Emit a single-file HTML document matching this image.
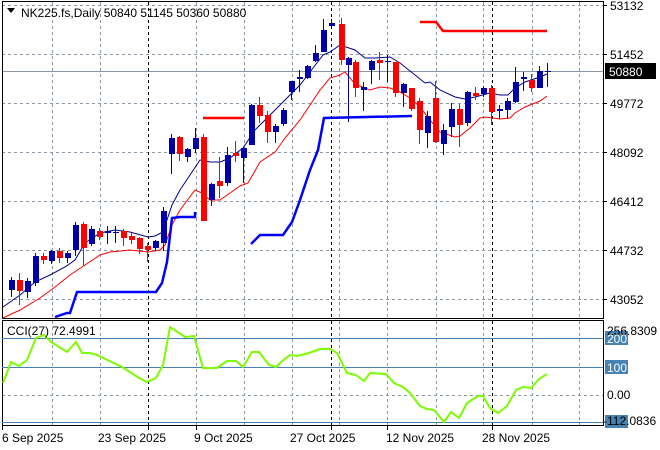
<!DOCTYPE html>
<html><head><meta charset="utf-8"><style>
html,body{margin:0;padding:0;background:#fff;}
svg{display:block;font-family:"Liberation Sans",sans-serif;}
</style></head><body>
<svg width="660" height="450" viewBox="0 0 660 450" xmlns="http://www.w3.org/2000/svg">
<rect width="660" height="450" fill="#fff"/>
<!-- grid main -->
<g stroke="#8a96a3" stroke-width="1" stroke-dasharray="3,3">
<path d="M2 5.5H603M2 54.5H603M2 103.5H603M2 152.5H603M2 201.5H603M2 250.5H603M2 299.5H603"/>
<path d="M52.5 2V318M100.5 2V318M196.5 2V318M244.5 2V318M292.5 2V318M339.5 2V318M387.5 2V318M436.5 2V318M483.5 2V318M532.5 2V318M579.5 2V318"/>
<path d="M52.5 321V425M100.5 321V425M196.5 321V425M244.5 321V425M292.5 321V425M339.5 321V425M387.5 321V425M436.5 321V425M483.5 321V425M532.5 321V425M579.5 321V425M2 395.5H603"/>
</g>
<g stroke="#000" stroke-width="1" stroke-dasharray="3,3">
<path d="M148.5 2V318M331.5 2V318M492.5 2V318M148.5 321V425M331.5 321V425M492.5 321V425"/>
</g>
<line x1="2" y1="71.5" x2="603" y2="71.5" stroke="#8a96a3"/>
<!-- MAs -->
<polyline fill="none" stroke="#00008b" stroke-width="1" points="3,307 20,295 35,282 50,275 65,267 75,260 85,243 100,233 115,230 130,232 148,237 155,236 163,232 172,205 180,190 190,175 200,160 210,162 220,162 230,158 243,148 255,130 270,115 285,100 300,85 310,72 323,55 330,52 340,45 355,50 365,58 375,58 390,57 400,63 415,75 425,83 430,82 440,90 455,97 465,99 475,97 490,93 500,95 508,95 515,88 525,82 540,77 547,74"/>
<polyline fill="none" stroke="#f00" stroke-width="1" points="3,318 20,310 40,298 55,287 70,275 85,265 100,255 110,252 130,250 148,252 160,250 165,245 172,225 180,210 195,190 202,193 210,200 220,200 230,193 240,186 248,183 260,162 275,152 285,138 300,120 310,105 320,90 330,78 340,75 345,72 355,84 370,90 380,87 390,88 400,92 410,98 420,107 430,120 440,132 455,137 460,136 470,128 480,118 485,117 500,119 510,118 515,113 525,107 540,101 547,96"/>
<!-- thick lines -->
<g fill="none" stroke-width="2.5">
<polyline stroke="#0000ff" points="55,317 67,313 70,313 77,292 156,292 162,283 167,262 172,218 180,217 195,217 195,212"/>
<polyline stroke="#0000ff" points="251,244 260,235 283,235 292,222 300,200 310,170 318,150 324,118 412,116"/>
<polyline stroke="#f00" points="203,118 244,118"/>
<polyline stroke="#f00" points="420,22 436,22 443,31 547,31"/>
</g>
<!-- candles -->
<g stroke-width="1">
<g stroke="#0000aa" fill="#0000aa">
<path d="M11.5 277V297M27.5 278V298M35.5 253V286M51.5 250V264M67.5 251V263M75.5 222V256M91.5 226V246M107.5 226V244M115.5 226V243M155.5 240V251M163.5 207V251M171.5 134V174M187.5 148V162M195.5 128V153M211.5 183V206M227.5 147V186M243.5 147V183M251.5 104V145M275.5 124V143M283.5 108V126M291.5 81V100M299.5 70V92M307.5 65V79M315.5 45V62M323.5 19V52M331.5 19V27M348.5 57V122M363.5 82V111M371.5 60V84M387.5 55V82M403.5 83V107M427.5 111V148M443.5 124V155M451.5 103V137M467.5 91V126M483.5 86V97M499.5 105V119M507.5 98V119M515.5 67V103M523.5 72V91M539.5 66V88M547.5 63V87"/>
</g>
<g fill="#0000aa">
<rect x="9" y="280" width="6" height="10"/><rect x="25" y="281" width="6" height="11"/><rect x="33" y="256" width="6" height="27"/><rect x="49" y="251" width="6" height="10"/><rect x="65" y="253" width="6" height="5"/><rect x="73" y="225" width="6" height="25"/><rect x="89" y="229" width="6" height="15"/><rect x="105" y="231" width="6" height="2"/><rect x="113" y="232" width="6" height="1"/><rect x="153" y="241" width="6" height="7"/><rect x="161" y="211" width="6" height="32"/><rect x="169" y="138" width="6" height="16"/><rect x="185" y="149" width="6" height="8"/><rect x="193" y="138" width="6" height="11"/><rect x="209" y="184" width="6" height="16"/><rect x="225" y="155" width="6" height="28"/><rect x="241" y="148" width="6" height="10"/><rect x="249" y="105" width="6" height="40"/><rect x="273" y="126" width="6" height="6"/><rect x="281" y="110" width="6" height="14"/><rect x="289" y="81" width="6" height="11"/><rect x="297" y="77" width="6" height="2"/><rect x="305" y="66" width="6" height="12"/><rect x="313" y="53" width="6" height="8"/><rect x="321" y="30" width="6" height="22"/><rect x="329" y="23" width="6" height="3"/><rect x="346" y="58" width="6" height="7"/><rect x="361" y="87" width="6" height="3"/><rect x="369" y="61" width="6" height="9"/><rect x="385" y="61" width="6" height="1"/><rect x="401" y="84" width="6" height="9"/><rect x="425" y="116" width="6" height="17"/><rect x="441" y="130" width="6" height="14"/><rect x="449" y="109" width="6" height="18"/><rect x="465" y="92" width="6" height="31"/><rect x="481" y="88" width="6" height="6"/><rect x="497" y="109" width="6" height="2"/><rect x="505" y="101" width="6" height="9"/><rect x="513" y="82" width="6" height="20"/><rect x="521" y="77" width="6" height="2"/><rect x="537" y="71" width="6" height="17"/><rect x="545" y="71" width="6" height="1"/>
</g>
<g stroke="#f00">
<path d="M19.5 273V305M43.5 253V264M59.5 248V263M83.5 222V266M99.5 228V240M123.5 229V246M131.5 233V244M139.5 237V254M147.5 243V262M179.5 136V161M203.5 134V221M219.5 157V198M235.5 141V162M259.5 97V123M267.5 111V143M341.5 18V65M355.5 60V97M379.5 52V80M395.5 62V97M411.5 88V111M419.5 98V144M435.5 81V143M459.5 104V147M475.5 87V100M491.5 85V125M531.5 74V92"/>
</g>
<g fill="#f00">
<rect x="17" y="280" width="6" height="11"/><rect x="41" y="256" width="6" height="4"/><rect x="57" y="251" width="6" height="7"/><rect x="81" y="224" width="6" height="24"/><rect x="97" y="231" width="6" height="6"/><rect x="121" y="231" width="6" height="7"/><rect x="129" y="236" width="6" height="4"/><rect x="137" y="238" width="6" height="11"/><rect x="145" y="246" width="6" height="4"/><rect x="177" y="137" width="6" height="17"/><rect x="201" y="137" width="6" height="84"/><rect x="217" y="181" width="6" height="5"/><rect x="233" y="153" width="6" height="3"/><rect x="257" y="105" width="6" height="11"/><rect x="265" y="115" width="6" height="17"/><rect x="339" y="24" width="6" height="36"/><rect x="353" y="62" width="6" height="26"/><rect x="377" y="60" width="6" height="3"/><rect x="393" y="62" width="6" height="31"/><rect x="409" y="88" width="6" height="21"/><rect x="417" y="101" width="6" height="29"/><rect x="433" y="98" width="6" height="44"/><rect x="457" y="109" width="6" height="16"/><rect x="473" y="93" width="6" height="3"/><rect x="489" y="88" width="6" height="24"/><rect x="529" y="80" width="6" height="8"/>
</g>
</g>
<!-- frames -->
<rect x="2.5" y="1.5" width="601" height="317" fill="none" stroke="#000"/>
<rect x="2.5" y="320.5" width="601" height="105" fill="none" stroke="#000"/>
<!-- header -->
<path d="M7 8H15L11 13Z" fill="#000"/>
<text x="21" y="17" font-size="12" fill="#000">NK225.fs,Daily  50840 51145 50360 50880</text>
<!-- price axis -->
<g font-size="12" fill="#000">
<text x="610" y="10">53132</text>
<text x="610" y="59">51452</text>
<text x="610" y="108">49772</text>
<text x="610" y="157">48092</text>
<text x="610" y="206">46412</text>
<text x="610" y="255">44732</text>
<text x="610" y="304">43052</text>
</g>
<g stroke="#000"><path d="M603 5.5H607M603 54.5H607M603 103.5H607M603 152.5H607M603 201.5H607M603 250.5H607M603 299.5H607"/></g>
<rect x="605" y="63" width="51" height="16" fill="#000"/>
<text x="609" y="76" font-size="12" fill="#fff">50880</text>
<!-- CCI -->
<g stroke="#4682b4"><path d="M2 338.5H603M2 367.5H603M2 422.5H603"/></g>
<polyline fill="none" stroke="#7cfc00" stroke-width="2" points="3,383 11,362 19,366 27,360 36,338 44,335 51,342 67,352 76,342 82,353 90,353 97,355 122,367 139,378 147,382 156,378 163,365 170,327 185,337 194,336 203,368 217,368 227,361 236,361 243,367 252,352 259,352 269,365 276,367 281,362 290,355 297,356 309,353 320,349 330,349 337,353 347,373 356,375 364,381 370,373 386,374 394,383 403,387 410,393 420,406 427,409 434,410 444,422 451,412 459,418 467,403 478,396 483,396 490,408 498,413 507,406 516,390 523,387 531,388 539,379 547,374"/>
<text x="7" y="335" font-size="12" fill="#000">CCI(27) 72.4991</text>
<g font-size="12">
<rect x="605" y="331" width="23" height="14" fill="#4682b4"/>
<rect x="605" y="360" width="23" height="14" fill="#4682b4"/>
<rect x="605" y="415" width="23" height="13" fill="#4682b4"/>
<text x="607" y="335" fill="#000">256.8309</text>
<text x="607" y="343" fill="#fff">200</text>
<text x="607" y="372" fill="#fff">100</text>
<text x="607" y="399" fill="#000">0.00</text>
<text x="603" y="425" fill="#000">-112.0836</text>
</g>
<!-- dates -->
<g stroke="#000"><path d="M2.5 426V430M148.5 426V430M196.5 426V430M331.5 426V430M387.5 426V430M492.5 426V430"/></g>
<g font-size="12" fill="#000">
<text x="2" y="442">6 Sep 2025</text>
<text x="98" y="442">23 Sep 2025</text>
<text x="194" y="442">9 Oct 2025</text>
<text x="290" y="442">27 Oct 2025</text>
<text x="386" y="442">12 Nov 2025</text>
<text x="482" y="442">28 Nov 2025</text>
</g>
</svg>
</body></html>
